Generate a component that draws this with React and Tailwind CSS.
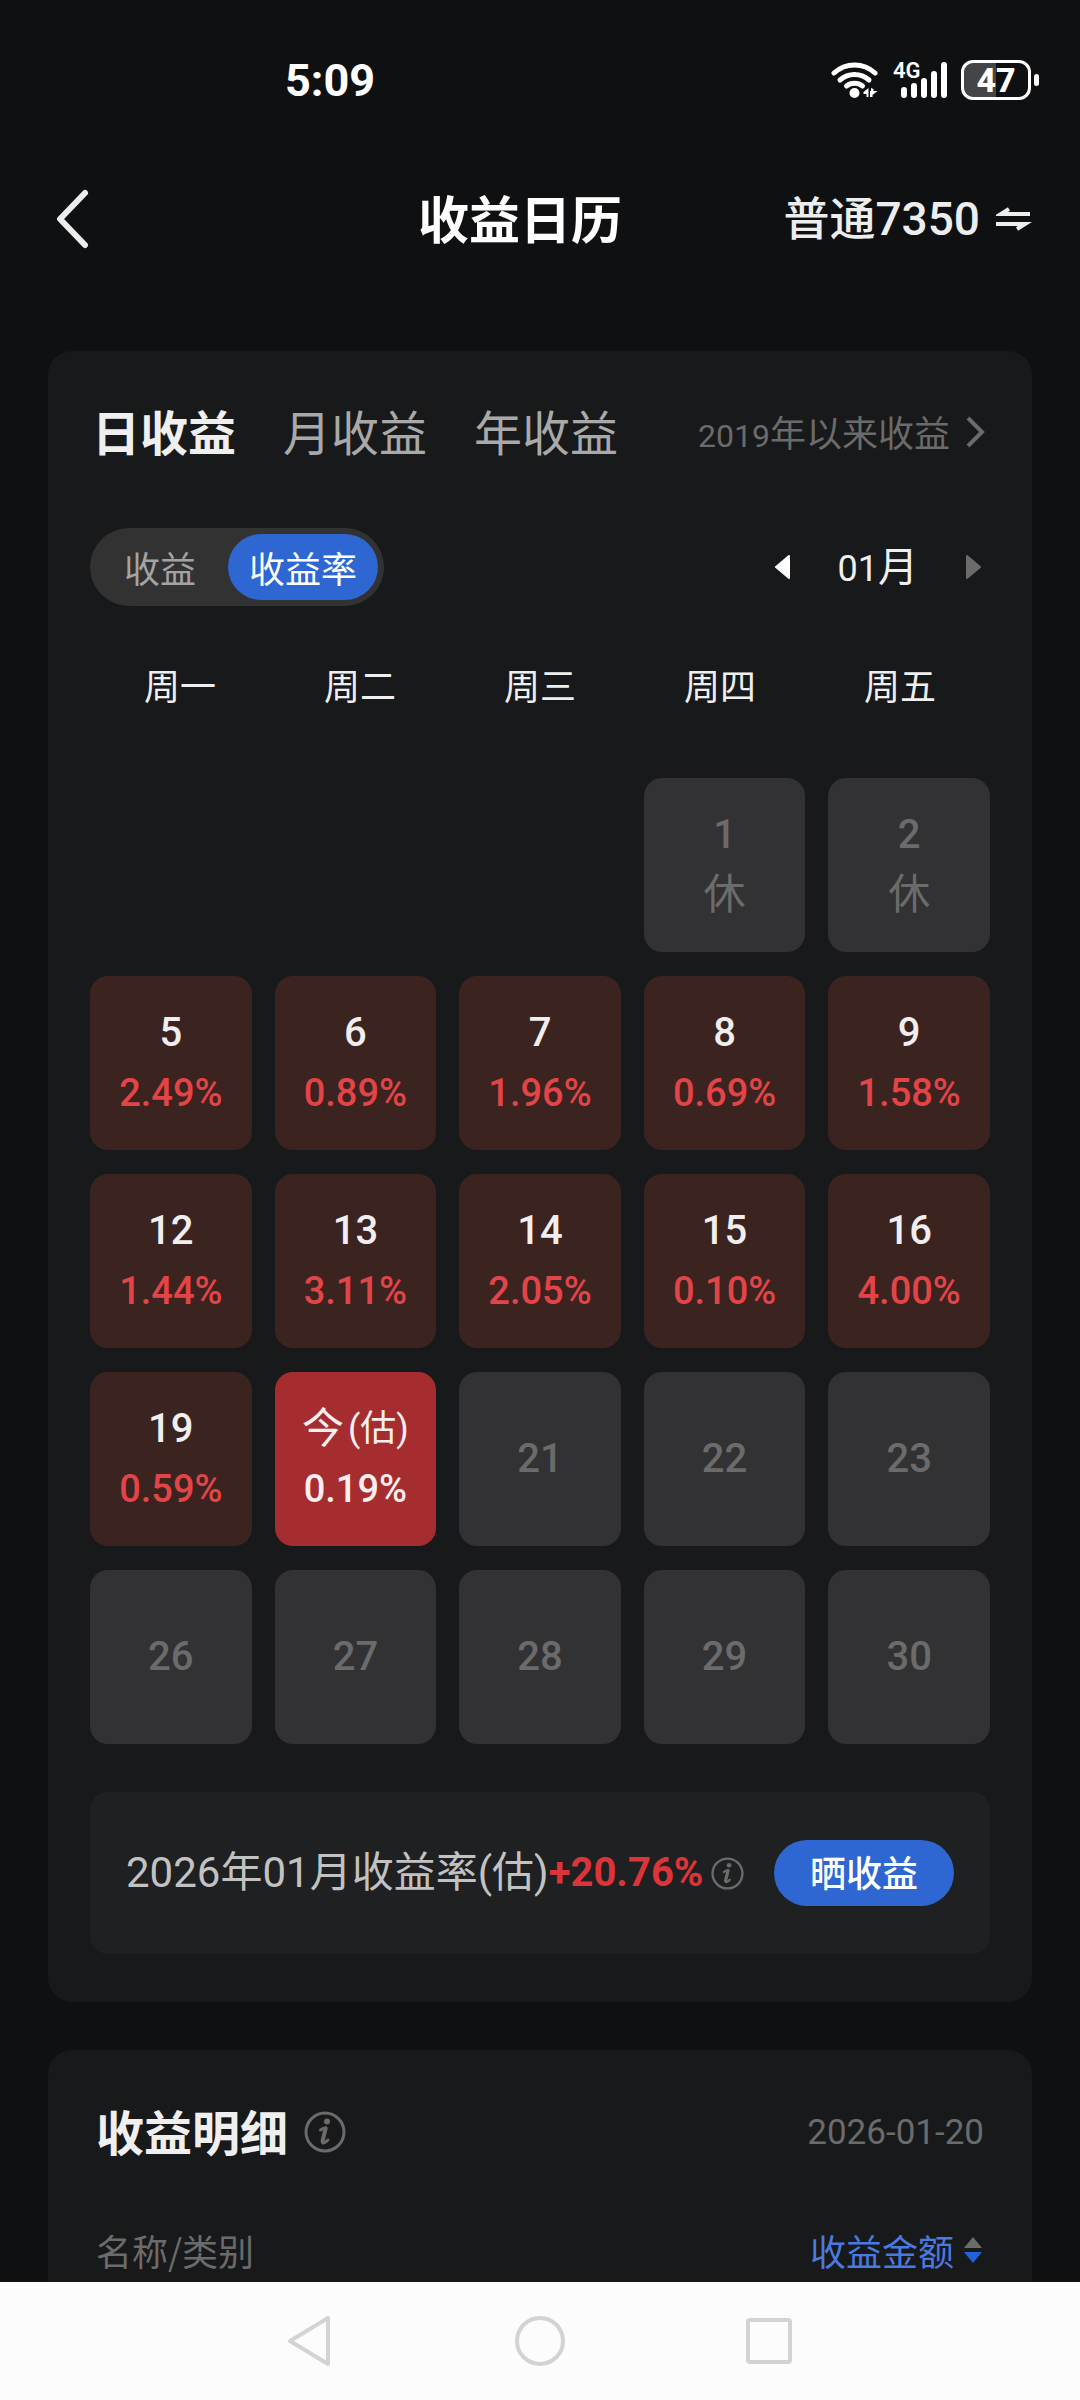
const WEEKDAYS = ["周一", "周二", "周三", "周四", "周五"];

const DAYS = [
  null,
  null,
  null,
  { day: "1", kind: "rest", value: "休" },
  { day: "2", kind: "rest", value: "休" },
  { day: "5", kind: "gain", value: "2.49%" },
  { day: "6", kind: "gain", value: "0.89%" },
  { day: "7", kind: "gain", value: "1.96%" },
  { day: "8", kind: "gain", value: "0.69%" },
  { day: "9", kind: "gain", value: "1.58%" },
  { day: "12", kind: "gain", value: "1.44%" },
  { day: "13", kind: "gain", value: "3.11%" },
  { day: "14", kind: "gain", value: "2.05%" },
  { day: "15", kind: "gain", value: "0.10%" },
  { day: "16", kind: "gain", value: "4.00%" },
  { day: "19", kind: "gain", value: "0.59%" },
  { day: "今", kind: "today", value: "0.19%" },
  { day: "21", kind: "future" },
  { day: "22", kind: "future" },
  { day: "23", kind: "future" },
  { day: "26", kind: "future" },
  { day: "27", kind: "future" },
  { day: "28", kind: "future" },
  { day: "29", kind: "future" },
  { day: "30", kind: "future" },
];

const CELL_STYLES = {
  rest: "bg-[#323234] text-[#6b6b6b]",
  future: "bg-[#323234] text-[#6b6b6b]",
  gain: "bg-[#3b2320] text-[#f0eeee]",
  today: "bg-[#a52d30] text-[#fbeeee]",
};

const VALUE_STYLES = {
  rest: "text-[42px]",
  gain: "text-[38px] font-medium text-[#e34447]",
  today: "text-[38px] font-medium",
};

const InfoIcon = ({ className }) => (
  <svg viewBox="0 0 42 42" fill="none" className={className} aria-hidden="true">
    <circle cx="21" cy="21" r="19" stroke="currentColor" strokeWidth="3" />
    <circle cx="23" cy="10.500" r="3" fill="currentColor" />
    <path
      d="M16.500 19c2-1.500 3.500-2.200 5.500-2.200l-3.500 13.700c-.5 2.500 2.500 1.500 5.500-1.500"
      stroke="currentColor"
      strokeWidth="3"
      strokeLinecap="round"
      strokeLinejoin="round"
    />
    <path d="M21.500 18l-3 12" stroke="currentColor" strokeWidth="4" strokeLinecap="round" />
  </svg>
);

const StatusBar = () => (
  <div className="flex h-40 items-center justify-between pr-[41px] pl-[285px] text-white">
    <span className="font-[Roboto] text-[45px] leading-none font-bold">
      5:09
    </span>
    <div className="flex items-center gap-[14px]">
      <svg width="48" height="38" viewBox="0 0 48 38" fill="none" aria-hidden="true">
        <g stroke="white" strokeWidth="5" strokeLinecap="round">
          <path d="M3 12a30 30 0 0 1 41 0" />
          <path d="M9 19a22 22 0 0 1 29 0" />
          <path d="M15.500 25a13 13 0 0 1 16 0" />
        </g>
        <circle cx="23.500" cy="32" r="5" fill="white" />
        <path d="M37.500 27v9h-2v-3h-3v-2zM40 27v3h-1v6h2.500v-2l5-4h-4v-2z" fill="white" />
      </svg>
      <div className="relative h-[38px] w-[54px]">
        <span className="absolute top-0 left-0 font-[Roboto] text-[22px] leading-[20px] font-semibold">
          4G
        </span>
        <svg width="54" height="38" viewBox="0 0 54 38" aria-hidden="true">
          <g stroke="white" strokeWidth="6" strokeLinecap="round">
            <path d="M11 29v5M21 25v9M31 20v14M41 13v21M51 4v30" />
          </g>
        </svg>
      </div>
      <div className="flex items-center gap-[3px]">
        <div className="flex h-[40px] w-[70px] items-center justify-center rounded-[12px] border-[3px] border-white bg-linear-to-r from-[#444546] from-50% to-transparent to-50% font-[Roboto] text-[34px] leading-none font-extrabold">
          47
        </div>
        <div className="h-3 w-[5px] rounded-full bg-white" />
      </div>
    </div>
  </div>
);

const Header = () => (
  <header className="grid h-[118px] grid-cols-[1fr_auto_1fr] items-center px-12 text-[#ededed]">
    <button type="button" aria-label="返回" className="w-fit pl-2">
      <svg width="34" height="60" viewBox="0 0 34 60" fill="none" aria-hidden="true">
        <path
          d="M29 4 4 30l25 26"
          stroke="currentColor"
          strokeWidth="6"
          strokeLinecap="round"
          strokeLinejoin="round"
        />
      </svg>
    </button>
    <h1 className="pr-10 pb-1 text-[51px] leading-none font-bold text-white">收益日历</h1>
    <button
      type="button"
      className="flex items-center gap-4 justify-self-end text-[46px] leading-none"
    >
      <span className="font-['Roboto','Noto_Sans_CJK_SC',sans-serif] font-medium">
        普通7350
      </span>
      <svg width="36" height="28" viewBox="0 0 36 28" fill="none" aria-hidden="true">
        <path d="M34 9H5l8-5M0 19h29l-8 5" stroke="currentColor" strokeWidth="4" />
      </svg>
    </button>
  </header>
);

const DayCell = ({ item }) => {
  if (!item) return <div />;

  return (
    <div
      className={`flex h-[174px] flex-col items-center justify-center rounded-[18px] font-['Roboto','Noto_Sans_CJK_SC',sans-serif] leading-[60px] ${CELL_STYLES[item.kind]}`}
    >
      {item.kind === "today" ? (
        <span className="flex items-center gap-1 text-[42px]">
          {item.day}
          <span className="text-[36px]">(估)</span>
        </span>
      ) : (
        <span className="text-[40px] font-medium">{item.day}</span>
      )}
      {item.value && <span className={VALUE_STYLES[item.kind]}>{item.value}</span>}
    </div>
  );
};

const CalendarCard = () => (
  <section className="rounded-[24px] bg-[#18191a] px-[42px] pb-12">
    <div className="flex h-[162px] items-center justify-between pr-1 pl-[2px]">
      <div
        role="tablist"
        className="flex gap-[47px] pb-1 text-[48px] leading-none text-[#a9a9a9]"
      >
        <button type="button" role="tab" aria-selected="true" className="font-bold text-[#efefef]">
          日收益
        </button>
        <button type="button" role="tab" aria-selected="false">
          月收益
        </button>
        <button type="button" role="tab" aria-selected="false">
          年收益
        </button>
      </div>
      <a href="#history" className="flex items-center gap-4 text-[36px] leading-none text-[#6b6b6b]">
        <span>
          <span className="font-[Roboto] text-[32px]">2019</span>年以来收益
        </span>
        <svg width="20" height="32" viewBox="0 0 20 32" fill="none" aria-hidden="true">
          <path d="m2 2 14 14L2 30" stroke="currentColor" strokeWidth="4" />
        </svg>
      </a>
    </div>

    <div className="mt-[15px] flex items-center justify-between pr-2">
      <div className="flex rounded-full bg-[#323232] p-[6px] text-[36px] leading-[66px]">
        <button type="button" className="pr-8 pl-7 text-[#a3a3a3]">
          收益
        </button>
        <button type="button" className="rounded-full bg-[#2e66d2] px-[21px] text-white">
          收益率
        </button>
      </div>
      <div className="flex items-center gap-12 text-[40px] leading-none text-[#efefef]">
        <button type="button" aria-label="上个月" className="text-white">
          <svg width="16" height="24" viewBox="0 0 16 24" aria-hidden="true">
            <path d="M15 1v22L2 12z" fill="currentColor" stroke="currentColor" strokeWidth="2" strokeLinejoin="round" />
          </svg>
        </button>
        <span className="pb-1">
          <span className="font-[Roboto] text-[36px]">01</span>月
        </span>
        <button type="button" aria-label="下个月" className="text-[#6b6b6b]">
          <svg width="16" height="24" viewBox="0 0 16 24" aria-hidden="true">
            <path d="M1 1v22l13-11z" fill="currentColor" stroke="currentColor" strokeWidth="2" strokeLinejoin="round" />
          </svg>
        </button>
      </div>
    </div>

    <div className="mt-12 grid grid-cols-5 text-center text-[36px] leading-[60px] text-[#efefef]">
      {WEEKDAYS.map((name) => (
        <span key={name}>{name}</span>
      ))}
    </div>

    <div className="mt-16 grid grid-cols-5 gap-x-[23px] gap-y-6">
      {DAYS.map((item, index) => (
        <DayCell key={index} item={item} />
      ))}
    </div>

    <div className="mt-12 flex h-[162px] items-center justify-between rounded-[18px] bg-[#1f2021] px-9">
      <div className="flex items-center leading-none">
        <span className="font-['Roboto','Noto_Sans_CJK_SC',sans-serif] text-[42px] text-[#c2c2c2]">
          2026年01月收益率(估)
        </span>
        <span className="font-[Roboto] text-[40px] font-bold text-[#dc3539]">+20.76%</span>
        <InfoIcon className="ml-2 size-[33px] text-[#6b6b6b]" />
      </div>
      <button
        type="button"
        className="rounded-full bg-[#2e66d2] px-9 pb-1 text-[36px] leading-[62px] font-medium text-white"
      >
        晒收益
      </button>
    </div>
  </section>
);

const DetailCard = () => (
  <section className="flex-1 rounded-t-[24px] bg-[#18191a] px-12">
    <div className="flex h-[164px] items-center justify-between">
      <div className="flex items-center gap-4">
        <h2 className="pb-1 text-[48px] leading-none font-bold text-[#efefef]">收益明细</h2>
        <InfoIcon className="size-[42px] text-[#6b6b6b]" />
      </div>
      <span className="font-[Roboto] text-[35px] leading-none text-[#6b6b6b]">2026-01-20</span>
    </div>
    <div className="flex items-center justify-between pt-1.5 text-[36px] leading-[60px] text-[#6b6b6b]">
      <span>名称/类别</span>
      <button type="button" className="flex items-center gap-2.5 text-[#4a7ae0]">
        收益金额
        <svg width="20" height="26" viewBox="0 0 20 26" aria-hidden="true">
          <path d="M9 0l9 11H0z" fill="#6b6b6b" />
          <path d="M9 26l9-11H0z" fill="#2163dc" />
        </svg>
      </button>
    </div>
  </section>
);

const NavBar = () => (
  <nav className="flex h-[118px] items-center justify-center gap-[180px] bg-[#fcfcfc] text-[#d3d3d3]">
    <button type="button" aria-label="返回">
      <svg width="50" height="54" viewBox="0 0 50 54" fill="none" aria-hidden="true">
        <path d="M43 4v46L5 27z" stroke="currentColor" strokeWidth="4" strokeLinejoin="round" />
      </svg>
    </button>
    <button type="button" aria-label="主屏幕">
      <svg width="50" height="50" viewBox="0 0 50 50" fill="none" aria-hidden="true">
        <circle cx="25" cy="25" r="23" stroke="currentColor" strokeWidth="4" />
      </svg>
    </button>
    <button type="button" aria-label="最近任务">
      <svg width="50" height="50" viewBox="0 0 50 50" fill="none" aria-hidden="true">
        <rect x="3" y="4" width="42" height="42" rx="2" stroke="currentColor" strokeWidth="4" />
      </svg>
    </button>
  </nav>
);

const App = () => (
  <div className="flex min-h-screen flex-col bg-[#0f1012] font-['Noto_Sans_CJK_SC',sans-serif]">
    <StatusBar />
    <Header />
    <main className="mt-[73px] flex flex-1 flex-col gap-12 px-12">
      <CalendarCard />
      <DetailCard />
    </main>
    <NavBar />
  </div>
);

export default App;
